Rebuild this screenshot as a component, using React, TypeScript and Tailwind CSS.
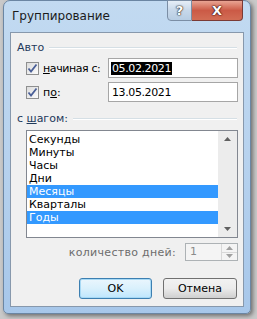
import React from 'react'

const steps = [
  { name: 'Секунды', on: false },
  { name: 'Минуты', on: false },
  { name: 'Часы', on: false },
  { name: 'Дни', on: false },
  { name: 'Месяцы', on: true },
  { name: 'Кварталы', on: false },
  { name: 'Годы', on: true },
]

const Check = () => (
  <div className="w-[13px] h-[13px] border border-[#8e8f8f] bg-gradient-to-br from-[#dcdcdc] to-[#fbfbfb] flex items-center justify-center shrink-0">
    <svg width="11" height="11" viewBox="0 0 11 11">
      <path d="M1.5 5.5 L4 8.5 L9.5 1.5" fill="none" stroke="#4a5f97" strokeWidth="1.8" />
    </svg>
  </div>
)

const Legend = ({ children }: { children: React.ReactNode }) => (
  <div className="flex items-center gap-[5px] h-[13px]">
    <span className="text-[#1e395b]">{children}</span>
    <div className="flex-1 flex flex-col mr-[6px]">
      <div className="h-px bg-[#d5dfe5]" />
      <div className="h-px bg-white" />
    </div>
  </div>
)

const Tri = ({ up, color = '#606060' }: { up?: boolean; color?: string }) => (
  <svg width="7" height="4" viewBox="0 0 7 4">
    <path d={up ? 'M0 4 L3.5 0 L7 4 Z' : 'M0 0 L3.5 4 L7 0 Z'} fill={color} />
  </svg>
)

export default function App() {
  return (
    <div
      className="w-[257px] h-[319px] bg-[#c9c9c9] relative overflow-hidden text-[11px] leading-[13px] text-black"
      style={{ fontFamily: '"DejaVu Sans", "Liberation Sans", sans-serif' }}
    >
      <div className="absolute left-[3px] top-0 w-[248px] h-[314px] rounded-t-[7px] rounded-b-[5px] bg-gradient-to-b from-[#c2daf1] via-[#b7d2ee] to-[#a7c7ea] border border-[#6b86a3] shadow-[2px_2px_4px_rgba(0,0,0,0.45)] flex flex-col px-[6px] pb-[6px]">
        {/* title bar */}
        <div className="h-[31px] flex items-start shrink-0">
          <span className="mt-[9px] ml-[2px] text-[12px] text-[#1b1b1b]">Группирование</span>
          <div className="ml-auto flex -mt-px mr-[1px]">
            <div className="w-[25px] h-[21px] rounded-bl-[4px] border border-[#7b8ea5] bg-gradient-to-b from-[#e6eef7] via-[#c7d8ea] to-[#b7cde3] flex items-center justify-center">
              <span className="text-white font-bold text-[13px] [text-shadow:0_0_1px_#333,0_0_1px_#333,0_0_2px_#333]">?</span>
            </div>
            <div className="w-[51px] h-[21px] rounded-br-[4px] border border-l-0 border-[#7a3a35] bg-gradient-to-b from-[#e8a493] via-[#cb5a46] to-[#d26d55] flex items-center justify-center">
              <span className="text-white font-bold text-[13px] [text-shadow:0_0_1px_#3a1010,0_0_1px_#3a1010,0_0_2px_#3a1010]">X</span>
            </div>
          </div>
        </div>
        {/* client area */}
        <div className="flex-1 bg-[#f0f0f0] border border-[#8798ac] flex flex-col pl-[6px] pt-[8px]">
          <Legend>Авто</Legend>
          <div className="flex flex-col gap-[4px] mt-[4px] pl-[9px] pr-[5px]">
            <div className="flex items-center h-[20px]">
              <Check />
              <span className="ml-[4px] w-[65px] tracking-[-0.4px]"><u>н</u>ачиная с:</span>
              <div className="flex-1 h-[20px] border border-[#a6a6a6] bg-white flex items-center px-[2px]">
                <span className="bg-black text-white px-px tracking-[-0.4px]">05.02.2021</span>
              </div>
            </div>
            <div className="flex items-center h-[20px]">
              <Check />
              <span className="ml-[4px] w-[65px]">п<u>о</u>:</span>
              <div className="flex-1 h-[20px] border border-[#a6a6a6] bg-white flex items-center px-[3px]">
                <span className="tracking-[-0.4px]">13.05.2021</span>
              </div>
            </div>
          </div>
          <div className="mt-[10px]">
            <Legend>
              с <u>ш</u>агом:
            </Legend>
          </div>
          <div className="ml-[9px] mr-[5px] mt-[5px] h-[108px] border border-[#828790] bg-white flex">
            <div className="flex-1 pt-[2px] flex flex-col">
              {steps.map((s) => (
                <div
                  key={s.name}
                  className={`h-[13px] pl-[2px] ${s.on ? 'bg-[#3399ff] text-white' : ''}`}
                >
                  {s.name}
                </div>
              ))}
            </div>
            <div className="w-[19px] bg-[#ececec] flex flex-col items-center justify-between py-[6px]">
              <Tri up />
              <Tri />
            </div>
          </div>
          <div className="flex items-center justify-end mt-[5px] mr-[5px] h-[18px]">
            <span className="text-[#6d6d6d] mr-[9px] tracking-[0.3px]">количество дней:</span>
            <div className="w-[53px] h-[18px] border border-[#adb2b5] bg-[#f4f4f4] flex">
              <span className="flex-1 pl-[4px] text-[#8a8a8a] leading-[16px]">1</span>
              <div className="w-[16px] flex flex-col border-l border-[#d8d8d8]">
                <div className="flex-1 flex items-center justify-center border-b border-[#d8d8d8]">
                  <Tri up color="#a0a0a0" />
                </div>
                <div className="flex-1 flex items-center justify-center">
                  <Tri color="#a0a0a0" />
                </div>
              </div>
            </div>
          </div>
          <div className="flex justify-end gap-[11px] mt-[17px] mr-[6px]">
            <button className="w-[73px] h-[21px] rounded-[3px] border border-[#3c7fb1] bg-gradient-to-b from-[#eaf6fd] via-[#d9f0fc] to-[#bee6fd] shadow-[inset_0_0_0_1px_#a7d9f5]">
              OK
            </button>
            <button className="w-[74px] h-[21px] rounded-[3px] border border-[#707070] bg-gradient-to-b from-[#f2f2f2] via-[#ebebeb] to-[#cfcfcf]">
              Отмена
            </button>
          </div>
        </div>
      </div>
    </div>
  )
}
